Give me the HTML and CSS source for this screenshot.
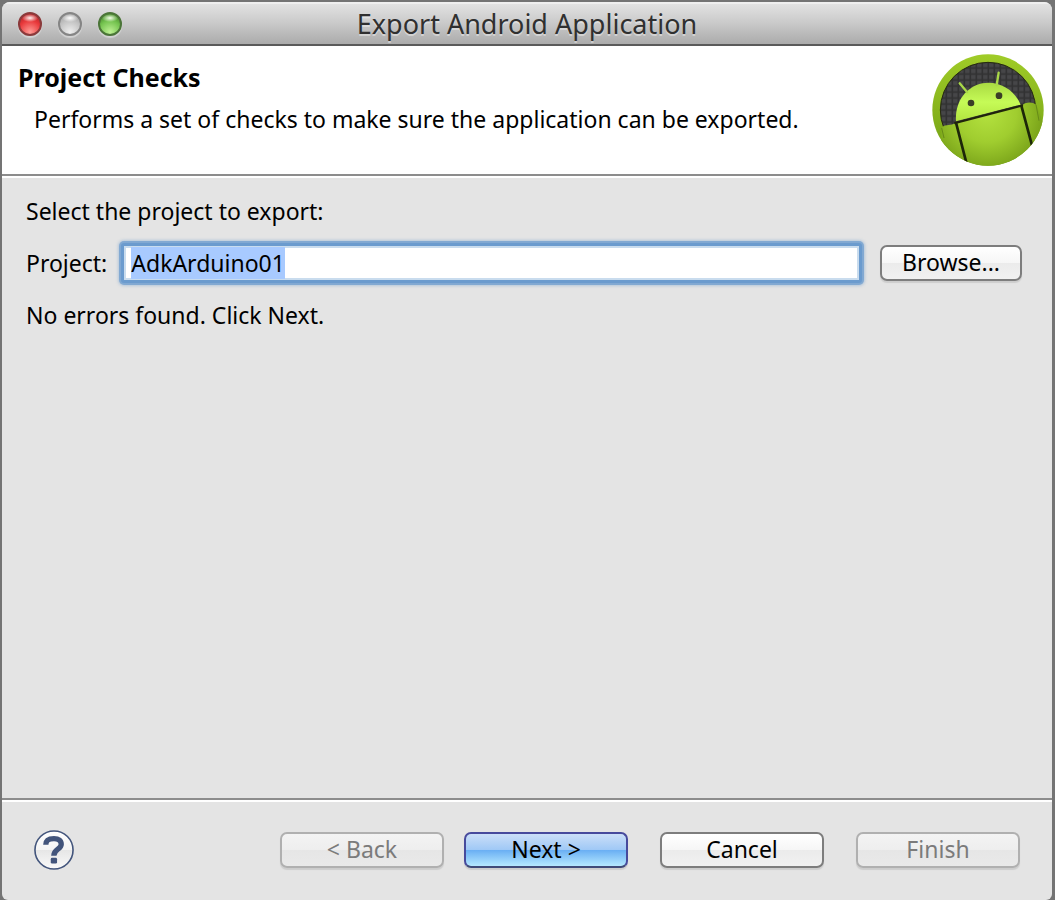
FILE: index.html
```html
<!DOCTYPE html>
<html lang="en">
<head>
    <meta charset="UTF-8">
    <meta name="viewport" content="width=device-width, initial-scale=1.0">
    <title>Export Android Application</title>
    <link rel="stylesheet" href="styles.css">
</head>
<body>
    <div class="window">
        <div class="titlebar">
            <div class="lights">
                <button type="button" class="light red" aria-label="Close"></button>
                <button type="button" class="light grey" aria-label="Minimize"></button>
                <button type="button" class="light green" aria-label="Zoom"></button>
            </div>
            <h1>Export Android Application</h1>
        </div>

        <header class="banner">
            <div class="banner-text">
                <h2>Project Checks</h2>
                <p>Performs a set of checks to make sure the application can be exported.</p>
            </div>
            <svg class="logo" viewBox="51 160 336 336" aria-hidden="true">
                <defs>
                    <linearGradient id="rim" x1="0" y1="0" x2="0" y2="1">
                        <stop offset="0" stop-color="#a0cc28"/>
                        <stop offset="1" stop-color="#6f9c12"/>
                    </linearGradient>
                    <radialGradient id="skin" gradientUnits="userSpaceOnUse" cx="215" cy="335" r="180">
                        <stop offset="0" stop-color="#b4e23f"/>
                        <stop offset="0.5" stop-color="#a0cd2f"/>
                        <stop offset="1" stop-color="#769f17"/>
                    </radialGradient>
                    <linearGradient id="face" x1="0" y1="0" x2="0" y2="1">
                        <stop offset="0" stop-color="#a9da42"/>
                        <stop offset="0.5" stop-color="#c6fb57"/>
                        <stop offset="1" stop-color="#b2e43f"/>
                    </linearGradient>
                    <pattern id="mesh" width="18" height="18" patternUnits="userSpaceOnUse">
                        <rect width="18" height="18" fill="#464648"/>
                        <path d="M4 0V18M0 4H18" stroke="#323233" stroke-width="5"/>
                    </pattern>
                    <clipPath id="disc"><circle cx="219" cy="328" r="167"/></clipPath>
                </defs>
                <circle cx="219" cy="328" r="167" fill="url(#rim)"/>
                <circle cx="219" cy="328" r="143" fill="url(#mesh)" stroke="#26290f" stroke-width="3"/>
                <g clip-path="url(#disc)">
                    <path d="M74 510L80 386Q82 374 96 374Q112 372 122 368L318 316L330 308Q350 302 364 312L390 380V510Z" fill="url(#skin)"/>
                    <path d="M80 382L87 412M363 312L372 360" stroke="#668a18" stroke-width="3" fill="none"/>
                    <path d="M123 362C119 305 151 260 202 248C254 239 300 270 317 312Z" fill="url(#face)"/>
                    <path d="M134 248L156 274M251 216L245 253" stroke="#a9d848" stroke-width="7" stroke-linecap="round"/>
                    <path d="M118 368L324 314" stroke="#20240c" stroke-width="6"/>
                    <path d="M123 366L154 486M319 315L351 434" stroke="#1d2609" stroke-width="8"/>
                </g>
                <circle cx="168" cy="307" r="10" fill="#3b3e27"/>
                <circle cx="252" cy="285" r="10" fill="#3b3e27"/>
            </svg>
        </header>

        <main class="page">
            <p>Select the project to export:</p>
            <div class="field">
                <label for="project">Project:</label>
                <input type="text" id="project" value="AdkArduino01" spellcheck="false" autofocus>
                <button type="button" class="btn browse">Browse...</button>
            </div>
            <p>No errors found. Click Next.</p>
        </main>

        <footer class="actions">
            <button type="button" class="help" aria-label="Help">
                <svg viewBox="0 0 42 42" aria-hidden="true">
                    <defs>
                        <linearGradient id="helpFill" x1="0" y1="0" x2="0" y2="1">
                            <stop offset="0" stop-color="#ffffff"/>
                            <stop offset="0.5" stop-color="#f4f4f4"/>
                            <stop offset="0.5" stop-color="#e6e6e6"/>
                            <stop offset="1" stop-color="#fafafa"/>
                        </linearGradient>
                    </defs>
                    <circle cx="21" cy="21" r="20" fill="url(#helpFill)" stroke="#43557c" stroke-width="1.7"/>
                    <path d="M12.4 15.5C12.4 9.6 16.5 9 21 9C26 9 28.6 11 28.6 15C28.6 20.5 20.8 20 20.8 27" fill="none" stroke="#43557c" stroke-width="5.6"/>
                    <rect x="17.6" y="29.2" width="6.6" height="6" rx="1.4" fill="#43557c"/>
                </svg>
            </button>
            <div class="nav">
                <button type="button" class="btn" disabled>&lt; Back</button>
                <button type="button" class="btn primary">Next &gt;</button>
            </div>
            <button type="button" class="btn">Cancel</button>
            <button type="button" class="btn" disabled>Finish</button>
        </footer>
    </div>

    <script>
        const project = document.getElementById('project');
        project.focus();
        project.select();
    </script>
</body>
</html>
```

FILE: styles.css
```css
* {
    box-sizing: border-box;
}

body {
    margin: 0;
    padding: 2px 3px 0 2px;
    min-height: 100vh;
    display: flex;
    background: #747474;
    color: #000;
    font-family: "Noto Sans", "Open Sans", sans-serif;
    font-size: 23px;
    line-height: 28px;
}

h1, h2, p {
    margin: 0;
}

button, input {
    font: inherit;
    color: inherit;
}

.window {
    flex: 1;
    min-width: 0;
    display: flex;
    flex-direction: column;
    background: #e4e4e4;
    border-radius: 8px 8px 6px 6px;
    overflow: hidden;
}

.titlebar {
    display: grid;
    grid-template-columns: 1fr auto 1fr;
    align-items: center;
    height: 44px;
    padding: 0 16px;
    background: linear-gradient(#e2e2e2, #cbcbcb 45%, #ababab);
    border-top: 2px solid #efefef;
    border-bottom: 2px solid #5a5a5a;
}

.titlebar h1 {
    font-size: 27px;
    font-weight: normal;
    color: #303030;
    text-shadow: 0 2px 0 rgba(255, 255, 255, 0.4);
}

.lights {
    display: flex;
    gap: 16px;
}

.light {
    width: 24px;
    height: 24px;
    padding: 0;
    border: 2px solid #777;
    border-radius: 50%;
    box-shadow: 0 2px 1px rgba(255, 255, 255, 0.4);
}

.red {
    border-color: #8b3a3b;
    background: radial-gradient(ellipse 8px 4px at 50% 20%, #fff3f1, transparent), radial-gradient(circle at 50% 90%, #ff9c96, #e93a3c 55%, #a51d22);
}

.grey {
    border-color: #858585;
    background: radial-gradient(ellipse 8px 4px at 50% 20%, #fff, transparent), radial-gradient(circle at 50% 90%, #eee, #c3c3c3 55%, #999);
}

.green {
    border-color: #4b7538;
    background: radial-gradient(ellipse 8px 4px at 50% 20%, #f4ffe9, transparent), radial-gradient(circle at 50% 90%, #bff195, #74c34f 55%, #37731f);
}

.banner {
    display: flex;
    justify-content: space-between;
    align-items: flex-start;
    padding: 8px 8px 8px 16px;
    background: #fff;
    border-bottom: 2px solid #8c8c8c;
}

.banner-text {
    padding-top: 9px;
}

.banner h2 {
    font-size: 25px;
    line-height: 28px;
}

.banner p {
    padding: 14px 0 0 16px;
}

.logo {
    flex: none;
    width: 112px;
    height: 112px;
}

.page {
    flex: 1;
    display: flex;
    flex-direction: column;
    gap: 18px;
    padding: 19px 30px 19px 24px;
    border-top: 2px solid #fff;
}

.field {
    display: flex;
    align-items: center;
}

.field input {
    flex: 1;
    min-width: 0;
    height: 40px;
    margin: 0 18px 0 14px;
    padding: 0 7px;
    background: #fff;
    border: 3px solid #6b9bce;
    border-radius: 3px;
    outline: none;
    box-shadow: 0 0 0 2px rgba(107, 155, 206, 0.7), 0 0 3px 3px rgba(107, 155, 206, 0.4), inset 0 0 0 2px #c9dcee;
}

.field input::selection {
    background: #a8caff;
    color: #000;
}

.btn {
    width: 164px;
    height: 36px;
    padding: 0 0 2px;
    border: 2px solid #7d7d7d;
    border-radius: 7px;
    background: linear-gradient(#fff, #f6f6f6 50%, #ebebeb 50%, #f1f1f1);
    box-shadow: 0 2px 1px rgba(0, 0, 0, 0.1);
}

.btn:disabled {
    color: #7b7b7b;
    border-color: #b0b0b0;
    background: linear-gradient(#f3f3f3, #eeeeee 50%, #e6e6e6 50%, #e9e9e9);
}

.browse {
    width: 142px;
}

.primary {
    border-color: #474a9c;
    border-bottom-color: #3f4a78;
    background: linear-gradient(#cbdff8, #9fc8f6 50%, #69aef3 50%, #b5e8ff);
}

.actions {
    display: flex;
    align-items: center;
    gap: 32px;
    height: 102px;
    padding: 0 32px;
    border-top: 2px solid #8c8c8c;
    box-shadow: inset 0 2px 0 #fff;
}

.help {
    width: 40px;
    height: 40px;
    margin-right: auto;
    padding: 0;
    border: 0;
    background: none;
}

.help svg {
    display: block;
}

.nav {
    display: flex;
    gap: 20px;
}
```
